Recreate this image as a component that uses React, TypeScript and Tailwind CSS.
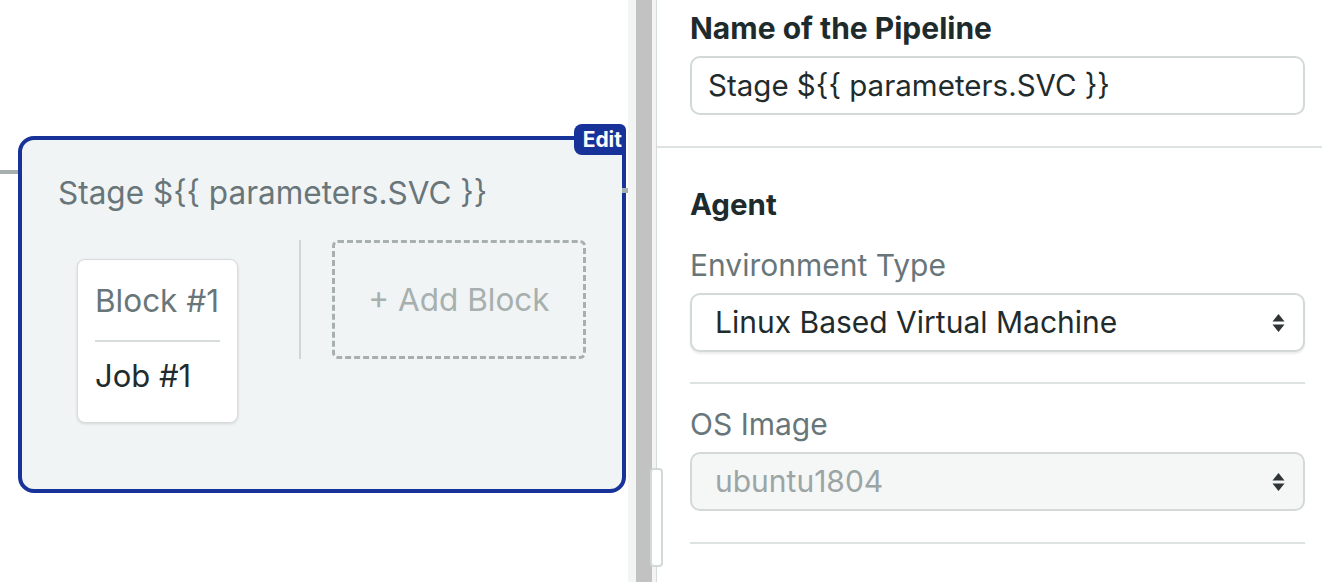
import React from "react";

const font = { fontFamily: 'Inter, "Liberation Sans", Arial, sans-serif' };

function Arrows() {
  return (
    <svg width="13" height="22" viewBox="0 0 13 22" className="shrink-0">
      <path d="M6.5 2 L12.5 9.5 L0.5 9.5 Z" fill="#2f3537" />
      <path d="M0.5 12.5 L12.5 12.5 L6.5 20 Z" fill="#2f3537" />
    </svg>
  );
}

function Select({ value, disabled }: { value: string; disabled?: boolean }) {
  return (
    <div
      className={
        "flex h-[59px] items-center justify-between rounded-[10px] border-2 border-[#d3d8d8] pl-[23px] pr-[18px] text-[30px] " +
        (disabled
          ? "bg-[#f5f6f6] text-[#9ba5a4]"
          : "bg-white text-[#1f2b2c] shadow-[0_2px_2px_rgba(0,0,0,0.08)]")
      }
    >
      <span>{value}</span>
      <Arrows />
    </div>
  );
}

export default function App() {
  return (
    <div className="flex h-[582px] w-[1322px] overflow-hidden bg-white" style={font}>
      {/* canvas */}
      <div className="relative w-[628px] shrink-0 pl-[18px] pt-[136px]">
        <div className="absolute left-0 top-[170px] h-[4px] w-[20px] bg-[#a6afad]" />
        <div className="relative h-[357px] w-[608px] rounded-[16px] border-4 border-[#17339a] bg-[#f1f4f5]">
          <div className="absolute -right-[4px] -top-[16px] rounded-l-[8px] rounded-tr-[6px] bg-[#17339a] pl-[9px] pr-[4px] text-[21px] font-bold leading-[31px] text-white">
            Edit
          </div>
          <div className="absolute -right-[6px] top-[48px] h-[5px] w-[6px] bg-[#a6afad]" />
          <div className="pl-[36px] pt-[37px] text-[31.5px] leading-[32px] text-[#68767a]">
            Stage ${"{{"} parameters.SVC {"}}"}
          </div>
          <div className="flex items-start pl-[55px] pt-[31px]">
            <div className="mt-[19px] h-[164px] w-[161px] rounded-[8px] border border-[#d7dbdb] bg-white px-[17px] pt-[25px] shadow-[0_1px_3px_rgba(0,0,0,0.12)]">
              <div className="text-[31.5px] leading-[32px] text-[#68767a]">Block #1</div>
              <div className="mt-[23px] h-[2px] bg-[#d7dcdc]" />
              <div className="mt-[18px] text-[31px] leading-[32px] text-[#1f2b2c]">Job #1</div>
            </div>
            <div className="ml-[61px] h-[119px] w-[2px] bg-[#d0d6d6]" />
            <div className="ml-[31px] flex h-[119px] w-[254px] items-center justify-center rounded-[6px] border-[3px] border-dashed border-[#a7b0ae] text-[31.5px] text-[#a7b0ae]">
              + Add Block
            </div>
          </div>
        </div>
      </div>

      {/* splitter */}
      <div className="relative flex shrink-0">
        <div className="w-[8px] bg-[#f3f4f4]" />
        <div className="w-[16px] bg-[#c2c2c2]" />
        <div className="w-[4px] bg-[#f3f4f4]" />
        <div className="w-[1px] bg-[#d5dada]" />
        <div className="absolute left-[22px] top-[468px] h-[99px] w-[13px] rounded-[4px] border-2 border-[#d3d8d8] bg-white" />
      </div>

      {/* properties */}
      <div className="flex-1">
        <div className="border-b-2 border-[#dde2e2] pb-[31px] pl-[33px] pr-[17px] pt-[13px]">
          <div className="text-[30px] font-bold leading-[30px] text-[#1e2b2c]">Name of the Pipeline</div>
          <div className="mt-[13px] flex h-[59px] items-center rounded-[10px] border-2 border-[#d3d8d8] bg-white pl-[16px] text-[29.5px] text-[#1f2b2c]">
            Stage ${"{{"} parameters.SVC {"}}"}
          </div>
        </div>
        <div className="pl-[33px] pr-[17px]">
          <div className="mt-[41px] text-[29.5px] font-bold leading-[30px] text-[#1e2b2c]">Agent</div>
          <div className="mt-[31px] text-[30px] leading-[30px] text-[#68767a]">Environment Type</div>
          <div className="mt-[13px]">
            <Select value="Linux Based Virtual Machine" />
          </div>
          <div className="mt-[30px] h-[2px] bg-[#dde2e2]" />
          <div className="mt-[25px] text-[30px] leading-[30px] text-[#68767a]">OS Image</div>
          <div className="mt-[13px]">
            <Select value="ubuntu1804" disabled />
          </div>
          <div className="mt-[31px] h-[2px] bg-[#dde2e2]" />
        </div>
      </div>
    </div>
  );
}
